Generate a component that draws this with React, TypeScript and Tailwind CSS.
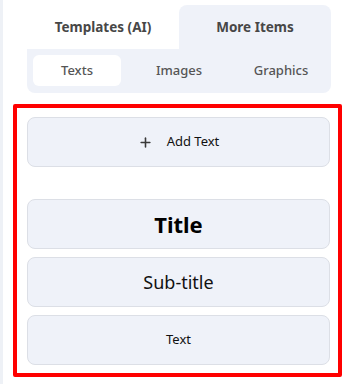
import { Plus } from 'lucide-react';

const subTabs = ['Texts', 'Images', 'Graphics'];

const textPresets = [
  { label: 'Title', cls: 'text-[22px] font-bold text-black' },
  { label: 'Sub-title', cls: 'text-[18px] text-[#111]' },
  { label: 'Text', cls: 'text-[13px] text-[#111]' },
];

export default function App() {
  return (
    <div className="flex min-h-[384px] w-[350px] bg-white font-['Noto_Sans',sans-serif]">
      <div className="w-[3px] shrink-0 bg-[#eef1f6]" />
      <div className="flex flex-1 flex-col pt-[5px]">
        {/* top tabs */}
        <div className="ml-[24px] w-[304px]">
          <div className="grid h-[44px] grid-cols-2">
            <button className="text-[13.5px] font-bold text-[#474747]">Templates (AI)</button>
            <button className="rounded-t-[8px] bg-[#eff2f9] text-[13.5px] font-bold text-[#474747]">
              More Items
            </button>
          </div>
          <div className="grid h-[44px] grid-cols-3 gap-[14px] rounded-b-[8px] bg-[#eff2f9] px-[6px] pt-[6px] pb-[7px]">
            {subTabs.map((t, i) => (
              <button
                key={t}
                className={`rounded-[6px] text-[13px] font-medium text-[#555] ${i === 0 ? 'bg-white' : ''}`}
              >
                {t}
              </button>
            ))}
          </div>
        </div>

        {/* text section */}
        <div className="mt-[11px] ml-[10px] flex w-[329px] flex-col rounded-[2px] border-4 border-[#ff0000] pt-[9px] pr-[8px] pb-[8px] pl-[10px]">
          <button className="flex h-[50px] items-center justify-center gap-[14px] rounded-[8px] border border-[#dcdfe6] bg-[#eff2f9] text-[13px] text-[#111]">
            <Plus size={15} strokeWidth={2.5} className="text-[#3a3a3a]" />
            Add Text
          </button>
          <div className="mt-[32px] flex flex-col gap-[8px]">
            {textPresets.map((p) => (
              <button
                key={p.label}
                className={`flex h-[50px] items-center justify-center rounded-[8px] border border-[#dcdfe6] bg-[#eff2f9] ${p.cls}`}
              >
                {p.label}
              </button>
            ))}
          </div>
        </div>
      </div>
    </div>
  );
}
